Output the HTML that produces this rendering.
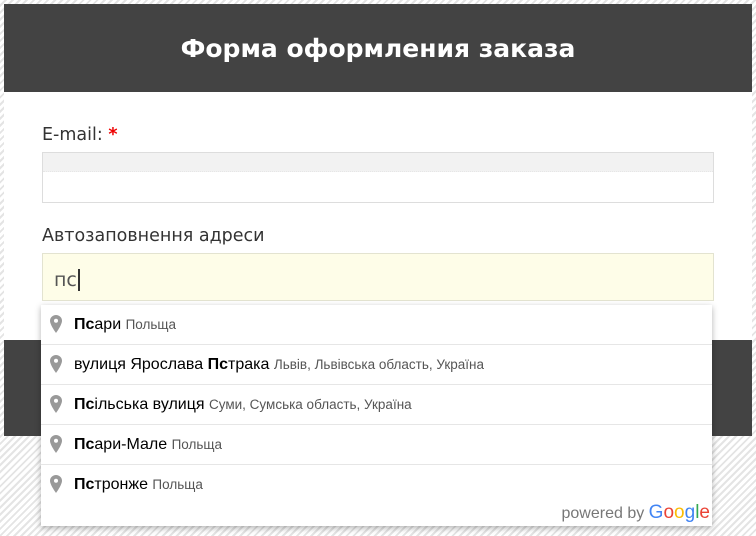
<!DOCTYPE html>
<html><head><meta charset="utf-8"><style>
body{margin:0;width:756px;height:536px;overflow:hidden;position:relative;font-family:"Liberation Sans","DejaVu Sans",sans-serif;
background:repeating-linear-gradient(135deg,#fff 0 3px,#e4e4e4 3px 5px);}
.card{position:absolute;left:4px;top:4px;width:748px;height:432px;background:#fff;}
.hdr{position:absolute;left:0;top:0;width:748px;height:88px;background:#434343;color:#fff;font:bold 25px "DejaVu Sans",sans-serif;text-align:center;line-height:90px;}
.ftr{position:absolute;left:0;top:336px;width:748px;height:96px;background:#434343;}
.lbl{position:absolute;left:38px;font:17.5px "DejaVu Sans",sans-serif;color:#333;}
.in1{position:absolute;left:38px;top:148px;width:670px;height:49px;border:1px solid #ddd;background:#fff;}
.in1 div{height:18px;background:#f2f2f2;border-bottom:1px dotted #e6e6e6}
.in2{position:absolute;left:38px;top:249px;height:46px;border:1px solid #e3e3d0;background:#fefde8;font:19px "DejaVu Sans",sans-serif;color:#555;line-height:52px;padding-left:11px;width:659px}
.dd{position:absolute;left:41px;top:305px;width:671px;height:221px;background:#fff;box-shadow:0 2px 6px rgba(0,0,0,.3);}
.it{height:39px;border-bottom:1px solid #e6e6e6;font-size:16px;color:#000;line-height:40px;padding-left:33px;position:relative;white-space:nowrap}
.it small{font-size:13.5px;color:#555}
.it svg{position:absolute;left:9px;top:10px}
.pw{position:absolute;right:2px;bottom:2px;font-size:16px;color:#777}
</style></head><body>
<div class="card">
<div class="hdr">Форма оформления заказа</div>
<div class="lbl" style="top:121px">E-mail: <span style="color:#e00;font-weight:bold">*</span></div>
<div class="in1"><div></div></div>
<div class="lbl" style="top:222px">Автозаповнення адреси</div>
<div class="in2">пс<span style="border-left:2px solid #333;margin-left:1px"></span></div>
<div class="ftr"></div>
</div>
<div class="dd">
<div class="it"><svg width="12" height="18" viewBox="0 0 12 18"><path d="M6 0C2.7 0 0 2.6 0 5.8 0 10 6 18 6 18s6-8 6-12.2C12 2.6 9.3 0 6 0z" fill="#999"/><circle cx="6" cy="5.8" r="2" fill="#fff"/></svg><b>Пс</b>ари <small>Польща</small></div>
<div class="it"><svg width="12" height="18" viewBox="0 0 12 18"><path d="M6 0C2.7 0 0 2.6 0 5.8 0 10 6 18 6 18s6-8 6-12.2C12 2.6 9.3 0 6 0z" fill="#999"/><circle cx="6" cy="5.8" r="2" fill="#fff"/></svg>вулиця Ярослава <b>Пс</b>трака <small>Львів, Львівська область, Україна</small></div>
<div class="it"><svg width="12" height="18" viewBox="0 0 12 18"><path d="M6 0C2.7 0 0 2.6 0 5.8 0 10 6 18 6 18s6-8 6-12.2C12 2.6 9.3 0 6 0z" fill="#999"/><circle cx="6" cy="5.8" r="2" fill="#fff"/></svg><b>Пс</b>ільська вулиця <small>Суми, Сумська область, Україна</small></div>
<div class="it"><svg width="12" height="18" viewBox="0 0 12 18"><path d="M6 0C2.7 0 0 2.6 0 5.8 0 10 6 18 6 18s6-8 6-12.2C12 2.6 9.3 0 6 0z" fill="#999"/><circle cx="6" cy="5.8" r="2" fill="#fff"/></svg><b>Пс</b>ари-Мале <small>Польща</small></div>
<div class="it" style="border-bottom:none"><svg width="12" height="18" viewBox="0 0 12 18"><path d="M6 0C2.7 0 0 2.6 0 5.8 0 10 6 18 6 18s6-8 6-12.2C12 2.6 9.3 0 6 0z" fill="#999"/><circle cx="6" cy="5.8" r="2" fill="#fff"/></svg><b>Пс</b>тронже <small>Польща</small></div>
<div class="pw">powered by <span style="font-size:19px"><span style="color:#4285f4">G</span><span style="color:#ea4335">o</span><span style="color:#fbbc05">o</span><span style="color:#4285f4">g</span><span style="color:#34a853">l</span><span style="color:#ea4335">e</span></span></div>
</div>
</body></html>
